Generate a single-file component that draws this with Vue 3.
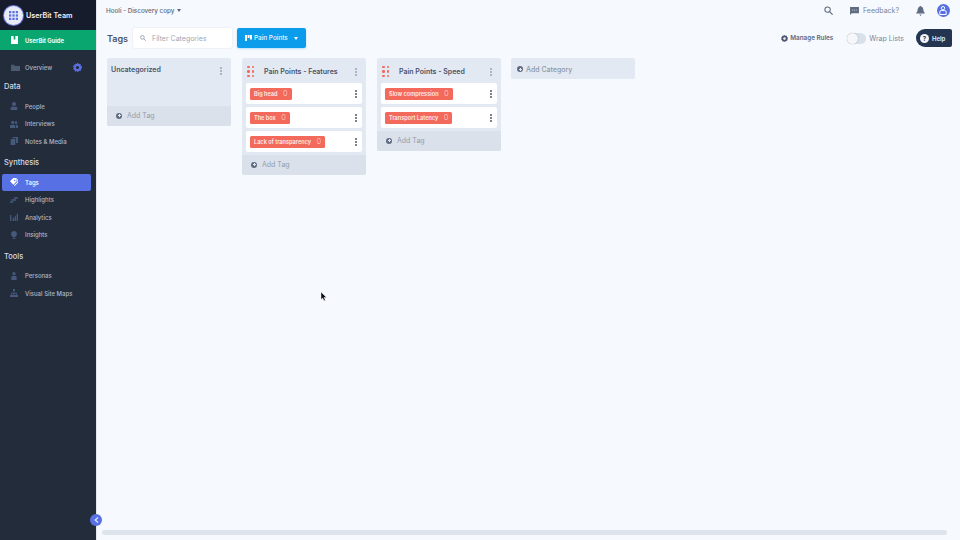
<template>
  <div class="app">
    <aside class="side">
      <div class="team">
        <span class="logo">
          <svg width="12" height="12" viewBox="0 0 12 12"><g fill="#5a6fe0"><rect v-for="c in grid" :key="c.k" :x="c.x" :y="c.y" width="3" height="3"/></g></svg>
        </span>
        <span class="team-name">UserBit Team</span>
      </div>
      <div class="guide">
        <svg width="7" height="8" viewBox="0 0 8 9"><path d="M0 0h3v4h2V0h3v9H0z" fill="#fff"/></svg>
        <span>UserBit Guide</span>
      </div>
      <div class="overview">
        <svg width="14" height="11" viewBox="0 0 14 11"><path d="M0 1h5l1 2h8v8H0z" fill="#4d5b72"/></svg>
        <span>Overview</span>
        <svg class="cog" width="9" height="9" viewBox="0 0 10 10"><circle cx="5" cy="5" r="3" fill="none" stroke="#5a6fe0" stroke-width="2.4"/><circle cx="5" cy="5" r="4.4" fill="none" stroke="#5a6fe0" stroke-width="1.2" stroke-dasharray="1.4 1.4"/></svg>
      </div>
      <template v-for="g in groups" :key="g.title">
        <div class="group-title" :class="g.cls">{{ g.title }}</div>
        <div v-for="i in g.items" :key="i.t" class="item" :class="{ active: i.t === 'Tags' }">
          <svg width="11" height="11" viewBox="0 0 12 12"><path :d="i.d" :fill="i.t === 'Tags' ? '#fff' : '#46597a'"/></svg>
          <span>{{ i.t }}</span>
        </div>
      </template>
      <span class="collapse">
        <svg width="5" height="6" viewBox="0 0 5 6"><path d="M4 .5 1.2 3 4 5.5" fill="none" stroke="#dfe5ff" stroke-width="1.3"/></svg>
      </span>
    </aside>

    <main class="main">
      <header class="top">
        <div class="project">Hooli - Discovery copy<i class="caret dark"></i></div>
        <div class="top-right">
          <svg width="9" height="9" viewBox="0 0 12 12"><circle cx="4.8" cy="4.8" r="3.6" fill="none" stroke="#5f6b80" stroke-width="1.4"/><path d="m7.5 7.5 4 4" stroke="#5f6b80" stroke-width="1.6"/></svg>
          <div class="feedback">
            <svg width="9" height="8" viewBox="0 0 10 9"><path d="M0 0h10v7H2L0 9z" fill="#5f6b80"/><path d="M2.5 3.5h5" stroke="#fff" stroke-dasharray="1 1" stroke-width=".8"/></svg>
            <span>Feedback?</span>
          </div>
          <svg class="bell" width="9" height="10" viewBox="0 0 9 10"><path d="M4.5 0C6.500.6 7.500 2.500 7.500 5L9 7.500H0L1.500 5C1.500 2.500 2.500.6 4.500 0zM3.300 8.500h2.400L4.500 10z" fill="#5f6b80"/></svg>
          <span class="avatar">
            <svg width="8" height="9" viewBox="0 0 8 9"><circle cx="4" cy="2.200" r="1.700" fill="none" stroke="#fff"/><path d="M.8 8.500V6q0-1.500 1.500-1.500h3.400Q7.200 4.500 7.200 6v2.500z" fill="none" stroke="#fff"/></svg>
          </span>
        </div>
      </header>

      <div class="toolbar">
        <h1>Tags</h1>
        <div class="filter">
          <svg width="6" height="6" viewBox="0 0 12 12"><circle cx="4.800" cy="4.800" r="3.600" fill="none" stroke="#9aa5b5" stroke-width="2"/><path d="m7.500 7.500 4 4" stroke="#9aa5b5" stroke-width="2"/></svg>
          <span>Filter Categories</span>
        </div>
        <button class="pain">
          <svg width="7" height="6" viewBox="0 0 7 6"><path d="M0 0h2v6H0zM2.600 0h2v3h-2zM5 0h2v4.500H5z" fill="#fff"/></svg>
          Pain Points<i class="caret light"></i>
        </button>
        <div class="tools">
          <div class="rules">
            <svg width="7" height="7" viewBox="0 0 10 10"><circle cx="5" cy="5" r="3" fill="none" stroke="#4a5670" stroke-width="2.400"/><circle cx="5" cy="5" r="4.400" fill="none" stroke="#4a5670" stroke-width="1.200" stroke-dasharray="1.400 1.400"/></svg>
            Manage Rules
          </div>
          <div class="wrap"><span class="switch"><b></b></span>Wrap Lists</div>
          <div class="help"><span class="q">?</span>Help</div>
        </div>
      </div>

      <div class="board">
        <section class="col plain">
          <div class="col-head uncat"><span>Uncategorized</span><i class="dots soft"></i></div>
          <div class="add tall"><i class="plus"></i>Add Tag</div>
        </section>
        <section v-for="c in cols" :key="c.name" class="col">
          <div class="col-head">
            <span class="drag"><b v-for="n in 6" :key="n"></b></span>
            <span class="name">{{ c.name }}</span>
            <i class="dots soft"></i>
          </div>
          <div v-for="t in c.tags" :key="t" class="row">
            <span class="tag">{{ t }}<em>0</em></span>
            <i class="dots"></i>
          </div>
          <div class="add"><i class="plus"></i>Add Tag</div>
        </section>
        <section class="add-cat"><i class="plus"></i>Add Category</section>
      </div>

      <div class="scroll"></div>
      <svg class="cursor" width="6" height="9" viewBox="0 0 6 9"><path d="M0 0v7.500l1.700-1.500L3 8.800l1.300-.6L3 5.500h2.500z" fill="#111" stroke="#fff" stroke-width=".4"/></svg>
    </main>
  </div>
</template>

<script setup>
const grid = []
for (let y = 0; y < 3; y++) for (let x = 0; x < 3; x++) grid.push({ k: `${x}${y}`, x: x * 4.5, y: y * 4.5 })

const person = 'M6 0a3 3 0 1 1 0 6 3 3 0 0 1 0-6zM1 12V9q0-2 2-2h6q2 0 2 2v3z'
const groups = [
  { title: 'Data', cls: 'first', items: [
    { t: 'People', d: person },
    { t: 'Interviews', d: 'M4 1a2.500 2.500 0 1 1 0 5 2.500 2.500 0 0 1 0-5zM9 2a2 2 0 1 1 0 4 2 2 0 0 1 0-4zM0 12V9q0-2 2-2h4q2 0 2 2v3zM9 12V7h1q2 0 2 2v3z' },
    { t: 'Notes & Media', d: 'M1 3h7v9H1zM4 0h8v9H9V2H4z' }
  ] },
  { title: 'Synthesis', items: [
    { t: 'Tags', d: 'M0 5 5 0h5v5l-5 5zM7 2.500a1 1 0 1 0 .1 0zM11 2v4l-5 5 1 1 5-5V2z' },
    { t: 'Highlights', d: 'M6 2h6v2H6zM2 5h7v2H2zM0 8h5v2H0z' },
    { t: 'Analytics', d: 'M0 3h2v9H0zM4 7h2v5H4zM7 5h2v7H7zM10 1h2v11h-2z' },
    { t: 'Insights', d: 'M6 0a4.500 4.500 0 0 1 2.500 8.200V9h-5v-.8A4.500 4.500 0 0 1 6 0zM4 10h4v2H4z' }
  ] },
  { title: 'Tools', items: [
    { t: 'Personas', d: 'M6 0a2.500 2.500 0 1 1 0 5 2.500 2.500 0 0 1 0-5zM2 12V8q0-2 2-2h4q2 0 2 2v4z' },
    { t: 'Visual Site Maps', d: 'M4.500 0h3v3h-1v2.500h4V9H12v3H8V9h1.200V7h-2.500v2H8v3H4V9h1.300V7H2.800v2H4v3H0V9h1.500V5.500h4V3h-1z' }
  ] }
]
const cols = [
  { name: 'Pain Points - Features', tags: ['Big head', 'The box', 'Lack of transparency'] },
  { name: 'Pain Points - Speed', tags: ['Slow compression', 'Transport Latency'] }
]
</script>

<style>
html, body { margin: 0; }
</style>

<style scoped>
* { box-sizing: border-box; }
.app { display: flex; width: 960px; height: 540px; overflow: hidden; font-family: Inter, "Liberation Sans", sans-serif; background: #f6f9fd; }
.side { position: relative; width: 97px; flex: none; background: #232c3b; border-right: 1px solid #e4e8ee; color: #b9c2d0; }
.team { height: 30px; display: flex; align-items: center; background: #161c2c; padding-left: 4px; gap: 3px; }
.logo { width: 19px; height: 19px; border-radius: 50%; background: #e9ecf8; box-shadow: 0 0 0 1px #6a78d8; display: flex; align-items: center; justify-content: center; }
.logo svg { width: 9px; height: 9px; }
.team-name { color: #eef1f6; font-size: 7.200px; font-weight: 600; }
.guide { height: 20px; background: #09a66f; display: flex; align-items: center; gap: 7px; padding-left: 11px; color: #f2fbf7; font-size: 5.800px; font-weight: 700; }
.overview { height: 34px; padding: 0 0 0 11px; display: flex; align-items: center; gap: 5px; font-size: 6px; font-weight: 500; color: #aeb6c4; }
.overview > svg:first-child { width: 9px; height: 7px; }
.cog { margin-left: 16px; }
.group-title { color: #d5dbe5; font-size: 7.500px; font-weight: 500; height: 12px; line-height: 12px; padding-left: 4px; margin: 7px 0 4.500px; }
.group-title.first { margin-top: -3px; }
.item { height: 17.500px; margin: 0 5px 0 2px; padding-left: 8px; display: flex; align-items: center; gap: 7px; font-size: 6px; font-weight: 500; color: #aeb6c4; border-radius: 2px; }
.item svg { width: 8px; height: 8px; flex: none; }
.item.active { background: #5770e4; color: #fff; }
.collapse { position: absolute; left: 90px; top: 514px; width: 12px; height: 12px; border-radius: 50%; background: #5770e4; display: flex; align-items: center; justify-content: center; }

.main { position: relative; flex: 1; min-width: 0; padding: 0 8px 0 10px; }
.top { height: 20px; padding-top: 1px; display: flex; align-items: center; justify-content: space-between; }
.project { margin-left: -1px; font-size: 6.300px; font-weight: 500; color: #5c6980; display: flex; align-items: center; gap: 3px; }
.caret { display: block; width: 0; height: 0; border-left: 2.500px solid transparent; border-right: 2.500px solid transparent; }
.caret.dark { border-top: 3px solid #5c6980; }
.caret.light { border-top: 3px solid #fff; margin-left: 4px; }
.top-right { display: flex; align-items: center; color: #76829a; }
.feedback { display: flex; align-items: center; gap: 3.500px; margin-left: 17px; font-size: 7px; color: #7b869a; }
.bell { margin-left: 16.500px; }
.avatar { width: 13px; height: 13px; border-radius: 50%; background: #5770e4; display: flex; align-items: center; justify-content: center; margin-left: 12px; margin-right: 2.500px; }

.toolbar { display: flex; align-items: center; height: 20px; margin-top: 8px; }
h1 { margin: 0 6px 0 0; width: 20px; font-size: 9px; font-weight: 600; color: #48536a; }
.filter { width: 99px; height: 20px; background: #fff; border-radius: 2px; box-shadow: 0 0 2px rgba(100,120,150,.2); display: flex; align-items: center; padding-left: 7px; gap: 6px; font-size: 7px; color: #9ea8b6; }
.pain { margin-left: 5px; width: 69px; height: 20px; border: 0; border-radius: 2px; padding: 0 0 0 8px; background: #0b9cec; color: #eef8ff; font: 500 6.400px Inter, "Liberation Sans", sans-serif; display: flex; align-items: center; gap: 2px; box-shadow: 0 1px 2px rgba(11,156,236,.25); }
.tools { margin-left: auto; display: flex; align-items: center; }
.rules { display: flex; align-items: center; gap: 2.500px; font-size: 6.300px; font-weight: 600; color: #5d6a85; }
.wrap { display: flex; align-items: center; gap: 3px; margin-left: 14px; font-size: 7px; color: #7b869a; }
.switch { display: block; width: 19px; height: 11px; border-radius: 6px; background: #d8e0ea; position: relative; }
.switch b { position: absolute; left: 0; top: 0; width: 11px; height: 11px; border-radius: 50%; background: #f5f7fa; box-shadow: 0 0 1px rgba(0,0,0,.4); }
.help { width: 36px; height: 18px; margin: 0 0 0 12px; border-radius: 9px 2px 2px 9px; background: #243552; color: #e8edf5; font-size: 6px; font-weight: 600; display: flex; align-items: center; padding-left: 4px; gap: 3px; }
.q { width: 9px; height: 9px; border-radius: 50%; background: #f2f4f8; color: #243552; font-size: 6px; font-weight: 700; display: flex; align-items: center; justify-content: center; }

.board { display: flex; align-items: flex-start; gap: 11px; margin-top: 10px; }
.col { width: 124px; background: #e3e9f2; border-radius: 2px; overflow: hidden; }
.col-head { height: 25px; display: flex; align-items: center; padding: 2px 5px 0 5px; }
.col-head.uncat { height: 48px; padding: 8px 5px 0 4px; align-items: flex-start; }
.col-head.uncat span { font-size: 7px; font-weight: 600; color: #48536a; line-height: 8px; }
.drag { display: grid; grid-template-columns: 2.500px 2.500px; gap: 2px; width: 7px; flex: none; }
.drag b { width: 2.500px; height: 2.500px; background: #f2695b; border-radius: 50%; }
.name { margin-left: 10px; font-size: 7px; font-weight: 600; color: #48536a; white-space: nowrap; }
.dots { display: block; width: 2px; height: 2px; border-radius: 50%; margin: 0 0 0 auto; background: #4f5a6e; box-shadow: 0 -3px #4f5a6e, 0 3px #4f5a6e; flex: none; }
.dots.soft { background: #98a3b3; box-shadow: 0 -3px #98a3b3, 0 3px #98a3b3; margin-right: 4px; }
.uncat .dots { margin-top: 4px; }
.row { height: 21px; margin: 0 4px 3px; background: #fff; border-radius: 2px; display: flex; align-items: center; padding: 0 5px 0 4px; }
.tag { display: flex; align-items: center; height: 12px; padding: 0 4px; background: #f3695c; color: #fdeeea; border-radius: 1.500px; font-size: 5.600px; font-weight: 600; white-space: nowrap; }
.tag em { font-style: normal; font-weight: 300; font-size: 7.500px; margin-left: 5.500px; color: #fbd0c9; }
.add { height: 20px; padding: 0 0 1px 9px; background: #dae1ea; display: flex; align-items: center; font-size: 7px; color: #929dac; }
.plus { position: relative; display: block; width: 6px; height: 6px; border-radius: 50%; background: #606c80; margin-right: 5px; flex: none; }
.plus::before { content: ""; position: absolute; left: 1.500px; top: 2.500px; width: 3px; height: 1px; background: #e3e9f2; }
.plus::after { content: ""; position: absolute; left: 2.500px; top: 1.500px; width: 1px; height: 3px; background: #e3e9f2; }
.add-cat { width: 124px; height: 21px; margin-left: -1px; padding: 1px 0 0 6px; background: #e3e9f2; border-radius: 2px; display: flex; align-items: center; font-size: 7px; font-weight: 500; color: #8d98a8; }
.add-cat .plus { margin-right: 3px; }
.scroll { position: absolute; left: 5px; right: 13px; top: 530px; height: 5px; border-radius: 3px; background: #dde4ec; }
.cursor { position: absolute; left: 224px; top: 292px; }
</style>
